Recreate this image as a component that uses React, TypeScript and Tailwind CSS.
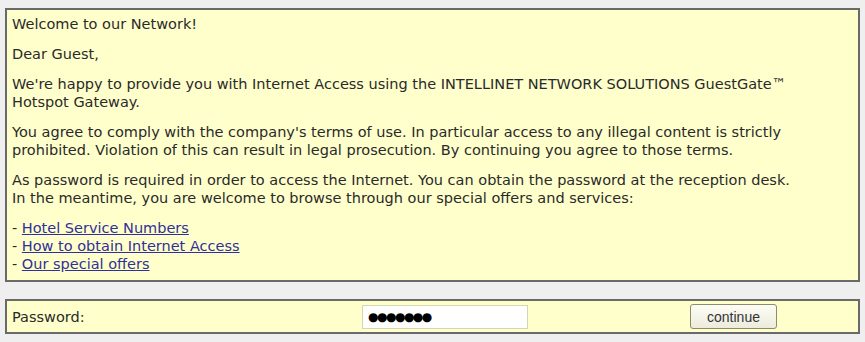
import React from "react";

// --- Data ---
const links = [
  "Hotel Service Numbers",
  "How to obtain Internet Access",
  "Our special offers",
];

// --- Components ---

const Welcome = () => (
  <div className="border-2 border-[#6a6a6a] bg-[#ffffcc] px-[5px] pt-[5px] pb-[7px]">
    <p className="mb-[12px]">Welcome to our Network!</p>
    <p className="mb-[12px]">Dear Guest,</p>
    <p className="mb-[12px] whitespace-nowrap">
      We're happy to provide you with Internet Access using the INTELLINET
      NETWORK SOLUTIONS GuestGate™
      <br />
      Hotspot Gateway.
    </p>
    <p className="mb-[12px] whitespace-nowrap">
      You agree to comply with the company's terms of use. In particular access
      to any illegal content is strictly
      <br />
      prohibited. Violation of this can result in legal prosecution. By
      continuing you agree to those terms.
    </p>
    <p className="mb-[12px] whitespace-nowrap">
      As password is required in order to access the Internet. You can obtain
      the password at the reception desk.
      <br />
      In the meantime, you are welcome to browse through our special offers and
      services:
    </p>
    <ul>
      {links.map((l) => (
        <li key={l}>
          -{" "}
          <a href="#" className="text-[#30309a] underline">
            {l}
          </a>
        </li>
      ))}
    </ul>
  </div>
);

const PasswordRow = () => (
  <div className="flex items-center h-[35px] border-2 border-[#6a6a6a] bg-[#ffffcc] px-[5px]">
    <span className="w-[350px]">Password:</span>
    <div className="flex items-center w-[166px] h-[24px] bg-white border border-[#d6d6b4] px-[5px] text-[12px] tracking-[-1.5px] text-black">
      ●●●●●●●
    </div>
    <button className="ml-[162px] w-[87px] h-[25px] rounded-[3px] border border-[#8b8b6e] bg-gradient-to-b from-[#fdfdf6] to-[#ecebdc] font-['Liberation_Sans',sans-serif] text-[14px] text-[#333]">
      continue
    </button>
  </div>
);

export default function App() {
  return (
    <div className="w-[865px] h-[342px] bg-[#efefef] pt-[8px] px-[5px] font-['DejaVu_Sans',Verdana,sans-serif] text-[14.5px] leading-[18px] text-[#2a2a2a]">
      <Welcome />
      <div className="mt-[17px]">
        <PasswordRow />
      </div>
    </div>
  );
}
